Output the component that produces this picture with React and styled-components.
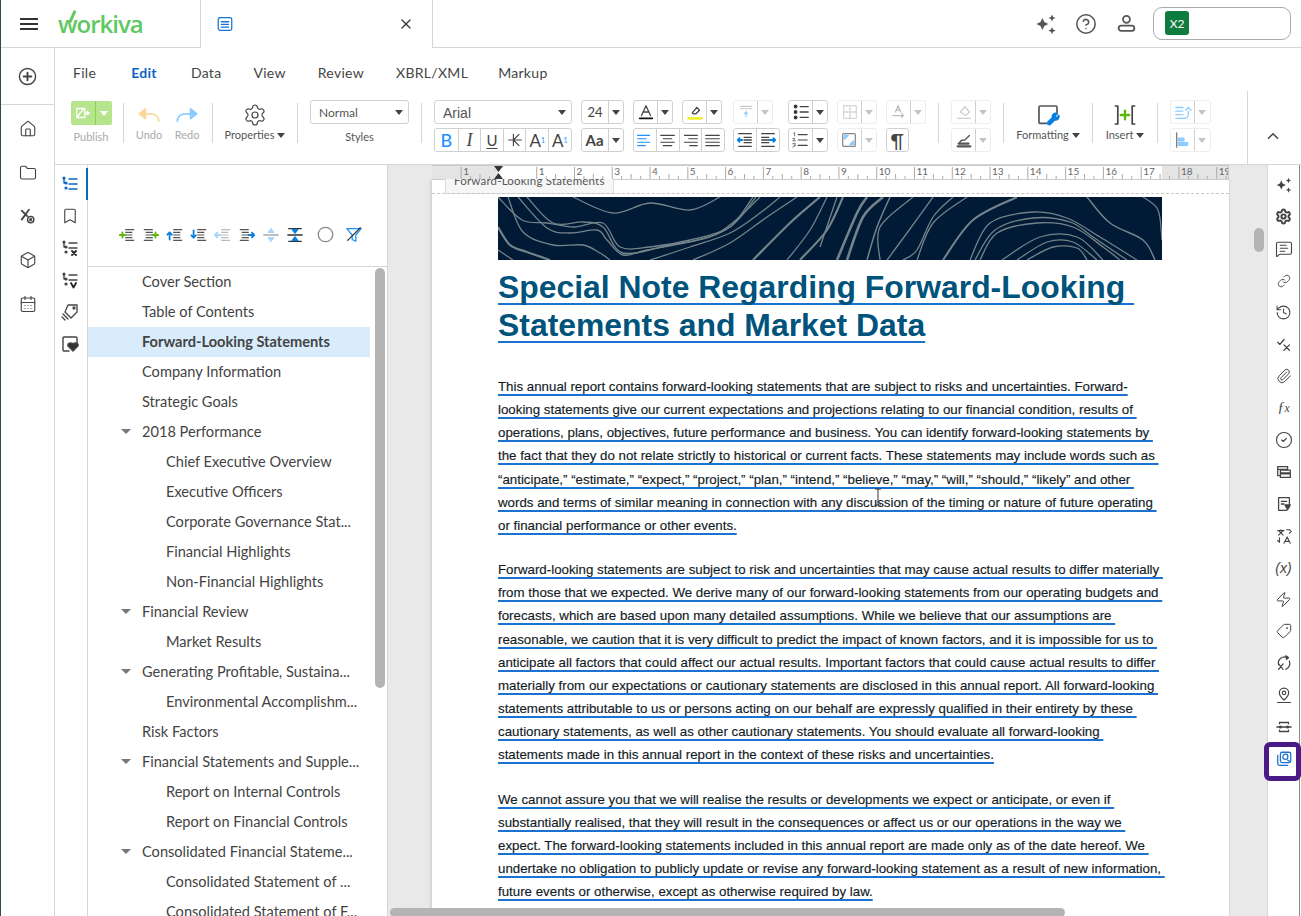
import React from 'react';
import styled, { createGlobalStyle } from 'styled-components';
import { Home, Folder, Box, CalendarDays, Bookmark, Settings, Link, History, Paperclip, CircleCheck, Zap, Tag, MapPin, ChevronUp, X, CircleHelp, MessageSquareText } from 'lucide-react';

const GlobalStyle = createGlobalStyle`
  html, body { margin: 0; padding: 0; background: #fff; }
  body { font-family: Lato, "Open Sans", sans-serif; color: #444; }
  * { box-sizing: border-box; }
`;

const Shell = styled.div`
  width: 1301px;
  height: 916px;
  overflow: hidden;
  display: flex;
  flex-direction: column;
  border-left: 1px solid #2f4a52;
  background: #fff;
`;

const TopBar = styled.header`
  height: 48px;
  flex: none;
  display: flex;
  align-items: stretch;
  border-bottom: 1px solid #d6d6d6;
`;

const Brand = styled.div`
  width: 199px;
  display: flex;
  align-items: center;
  padding-left: 19px;
  gap: 20px;
`;

const Burger = styled.span`
  width: 18px;
  height: 12px;
  border-top: 2px solid #333;
  border-bottom: 2px solid #333;
  position: relative;
  &::after {
    content: '';
    position: absolute;
    left: 0;
    right: 0;
    top: 3px;
    height: 2px;
    background: #333;
  }
`;

const Logo = styled.span`
  font-family: "Open Sans", sans-serif;
  font-size: 24px;
  font-weight: 600;
  letter-spacing: -1px;
  color: #5ec962;
  line-height: 1;
  margin-top: 1px;
  position: relative;
  &::after {
    content: '';
    position: absolute;
    left: 13px;
    top: -2px;
    width: 3px;
    height: 13px;
    border-radius: 2px;
    background: #5ec962;
    transform: rotate(24deg);
  }
`;

const DocTab = styled.div`
  width: 233px;
  height: 48px;
  background: #fff;
  border-left: 1px solid #d6d6d6;
  border-right: 1px solid #d6d6d6;
  display: flex;
  align-items: center;
  justify-content: space-between;
  padding: 0 18px 0 15px;
  color: #333;
`;

const TopActions = styled.div`
  margin-left: auto;
  display: flex;
  align-items: center;
  padding-right: 10px;
  color: #555;
`;

const TopIcon = styled.span`
  width: 40px;
  display: flex;
  justify-content: center;
`;

const Workspace = styled.div`
  width: 138px;
  height: 33px;
  margin-left: 7px;
  border: 1px solid #aaa;
  border-radius: 9px;
  padding: 3px 11px;
  display: flex;
`;

const WorkspaceBadge = styled.span`
  width: 24px;
  height: 24px;
  border-radius: 3px;
  background: #0f7b3e;
  color: #fff;
  font-size: 12px;
  display: flex;
  align-items: center;
  justify-content: center;
`;

const Body = styled.div`
  flex: 1;
  min-height: 0;
  display: flex;
`;

const LeftRail = styled.nav`
  width: 54px;
  flex: none;
  border-right: 1px solid #d6d6d6;
  color: #444;
`;

const CreateCell = styled.div`
  height: 57px;
  border-bottom: 1px solid #d6d6d6;
  display: flex;
  align-items: center;
  justify-content: center;
`;

const RailList = styled.div`
  display: flex;
  flex-direction: column;
  align-items: center;
  gap: 25.7px;
  padding-top: 15px;
  & > * { height: 18px; }
`;

const Main = styled.div`
  flex: 1;
  min-width: 0;
  display: flex;
  flex-direction: column;
`;

const Ribbon = styled.section`
  height: 117px;
  flex: none;
  display: flex;
  border-bottom: 1px solid #d6d6d6;
`;

const RibbonMain = styled.div`
  flex: 1;
  min-width: 0;
`;

const MenuRow = styled.div`
  height: 52px;
  display: flex;
  align-items: center;
  gap: 32px;
  padding: 0 0 3px 18px;
`;

const MenuItem = styled.span`
  font-size: 14px;
  letter-spacing: 0.3px;
  margin-left: ${({ $ml }) => $ml ?? 0}px;
  font-weight: ${({ $active }) => ($active ? 700 : 400)};
  color: ${({ $active }) => ($active ? '#0b65c2' : '#444')};
`;

const ToolRow = styled.div`
  display: flex;
  gap: 12px;
  padding-left: 16px;
`;

const Sep = styled.span`
  width: 1px;
  height: 40px;
  margin-top: 3px;
  background: #d6d6d6;
  flex: none;
`;

const ToolGroup = styled.div`
  width: ${({ $w }) => $w}px;
  flex: none;
  display: flex;
  flex-direction: column;
  align-items: center;
  padding-top: ${({ $pt }) => $pt ?? 0}px;
`;

const ToolPair = styled.div`
  width: ${({ $w }) => $w}px;
  flex: none;
  display: flex;
  justify-content: space-between;
`;

const ToolLabel = styled.span`
  font-size: 11px;
  line-height: 14px;
  white-space: nowrap;
  margin-top: ${({ $mt }) => $mt ?? 0}px;
  color: ${({ $muted }) => ($muted ? '#aaa' : '#555')};
`;

const Caret = styled.i`
  display: inline-block;
  width: 0;
  height: 0;
  border-left: ${({ $wide }) => ($wide ? 5.5 : 4.5)}px solid transparent;
  border-right: ${({ $wide }) => ($wide ? 5.5 : 4.5)}px solid transparent;
  border-top: 5px solid ${({ $color }) => $color || '#444'};
  margin-left: ${({ $ml }) => $ml ?? 0}px;
  vertical-align: 1px;
`;

const PublishBtn = styled.div`
  width: 41px;
  height: 24px;
  margin-top: 1px;
  border-radius: 2px;
  background: #b7e58d;
  display: flex;
`;

const PublishPart = styled.span`
  display: flex;
  align-items: center;
  justify-content: center;
  width: ${({ $w }) => $w}px;
  & + & { border-left: 1px solid #8fd14f; }
`;

const Select = styled.div`
  width: ${({ $w }) => $w}px;
  height: 24px;
  flex: none;
  border: 1px solid #d0d0d0;
  border-radius: 3px;
  display: flex;
  align-items: center;
  justify-content: space-between;
  padding: 1px 5px 0 ${({ $pad }) => $pad}px;
  font-size: ${({ $font }) => $font}px;
  font-family: ${({ $sans }) => ($sans ? '"Liberation Sans", sans-serif' : 'inherit')};
  color: #555;
`;

const FormatBlock = styled.div`
  width: ${({ $w }) => $w}px;
  flex: none;
  display: flex;
  flex-direction: column;
  gap: 4px;
`;

const FormatRow = styled.div`
  display: flex;
`;

const Seg = styled.div`
  flex: none;
  display: flex;
  height: 24px;
  margin-left: ${({ $ml }) => $ml ?? 0}px;
  border: 1px solid ${({ $off }) => ($off ? '#ededed' : '#d0d0d0')};
  border-radius: 3px;
`;

const Cell = styled.span`
  width: ${({ $w }) => $w ?? 22.6}px;
  flex: none;
  display: flex;
  align-items: center;
  justify-content: center;
  position: relative;
  color: #444;
  font-size: ${({ $font }) => $font ?? 15}px;
  font-weight: ${({ $bold }) => ($bold ? 700 : 400)};
  line-height: 1;
  & + & { border-left: 1px solid ${({ $off }) => ($off ? '#ededed' : '#d0d0d0')}; }
`;

const BoldLetter = styled.span`
  color: #1e90ff;
  font-weight: 500;
`;

const ItalicLetter = styled.span`
  font-family: "Liberation Serif", serif;
  font-style: italic;
`;

const UnderLetter = styled.span`
  text-decoration: underline;
  text-underline-offset: 2px;
`;

const Mini = styled.sub`
  font-size: 7px;
  color: #1e90ff;
  vertical-align: ${({ $up }) => ($up ? '8px' : '-3px')};
`;

const Collapse = styled.div`
  width: 54px;
  flex: none;
  align-self: flex-end;
  height: 73px;
  border-left: 1px solid #d6d6d6;
  display: flex;
  justify-content: center;
  padding: 36px 3px 0 0;
  color: #444;
`;

const Workbench = styled.div`
  flex: 1;
  min-height: 0;
  display: flex;
  position: relative;
  overflow: hidden;
`;

const TabRail = styled.div`
  width: 33px;
  flex: none;
  border-right: 1px solid #d6d6d6;
  display: flex;
  flex-direction: column;
  align-items: center;
  gap: 12px;
  padding: 9px 2px 0 0;
  position: relative;
  color: #444;
  & > * { height: 20px; }
`;

const ActiveMark = styled.span`
  position: absolute;
  top: 3px;
  right: -1px;
  width: 2px;
  height: 32px !important;
  background: #0b65c2;
`;

const Outline = styled.aside`
  width: 300px;
  flex: none;
  border-right: 1px solid #d6d6d6;
  position: relative;
  overflow: hidden;
`;

const OutlineTools = styled.div`
  height: 102px;
  border-bottom: 1px solid #d6d6d6;
  display: flex;
  align-items: center;
  padding: 38px 0 0 27px;
`;

const OutlineTool = styled.span`
  width: ${({ $w }) => $w ?? 24}px;
  display: flex;
  justify-content: center;
`;

const TreeRow = styled.div`
  height: 30px;
  width: 282px;
  display: flex;
  align-items: center;
  padding: 0 0 2px ${({ $depth }) => 33 + $depth * 24}px;
  font-size: 14.6px;
  white-space: nowrap;
  color: #444;
  font-weight: ${({ $selected }) => ($selected ? 700 : 400)};
  background: ${({ $selected }) => ($selected ? '#d9ecfb' : 'transparent')};
`;

const TreeSlot = styled.span`
  width: 21px;
  flex: none;
  display: flex;
`;

const Thumb = styled.span`
  position: absolute;
  background: #b4b4b4;
  border-radius: 5px;
  left: ${({ $x }) => $x}px;
  top: ${({ $y }) => $y}px;
  width: ${({ $w }) => $w}px;
  height: ${({ $h }) => $h}px;
`;

const DocArea = styled.main`
  flex: 1;
  min-width: 0;
  background: #e9e9e9;
  padding-left: 44px;
  position: relative;
  overflow: hidden;
`;

const PageColumn = styled.div`
  width: 797px;
`;

const RulerSvg = styled.svg`
  display: block;
  width: 797px;
  height: 15px;
`;

const Page = styled.article`
  background: #fff;
  height: 760px;
  box-shadow: -2px 0 2px #d4d4dc, 1px 0 1px #d8d8d8;
  position: relative;
  padding: 17px 0 0 66px;
`;

const PageTag = styled.div`
  position: absolute;
  left: 13px;
  top: -1px;
  width: 169px;
  height: 15px;
  background: #f6f6f6;
  border: 1px solid #dcdcdc;
  border-top: 0;
  overflow: hidden;
  font-size: 11.5px;
  line-height: 14px;
  padding-left: 8px;
  color: #555;
  letter-spacing: 0.2px;
  white-space: nowrap;
  & > span { position: relative; top: -5px; }
`;

const Dashes = styled.div`
  position: absolute;
  left: 0;
  right: 0;
  top: 13px;
  border-top: 1px dashed #c8c8c8;
`;

const Banner = styled.svg`
  display: block;
  width: 664px;
  height: 63px;
  background: #011a35;
`;

const Heading = styled.h1`
  margin: 8px 0 31px;
  font: 700 31.9px/38px "Liberation Sans", Arial, sans-serif;
  color: #00537a;
`;

const Para = styled.p`
  margin: 0 0 21px;
  font: 400 13.31px/23.15px "Liberation Sans", Arial, sans-serif;
  color: #131c26;
  -webkit-text-stroke: 0.15px #131c26;
`;

const Line = styled.span`
  display: block;
  white-space: pre;
  text-decoration: underline;
  text-decoration-color: #1a73d1;
  text-decoration-thickness: 2px;
  text-underline-offset: ${({ $offset }) => $offset ?? 3}px;
  text-decoration-skip-ink: none;
`;

const Cursor = styled.svg`
  position: absolute;
  left: 442px;
  top: 308px;
`;

const RightRail = styled.div`
  width: 33px;
  margin-right: 1px;
  flex: none;
  background: #fff;
  border-left: 1px solid #d6d6d6;
  border-right: 1px solid #8a8a8a;
  display: flex;
  flex-direction: column;
  align-items: center;
  padding-top: 4px;
  position: relative;
  color: #444;
`;

const RailSlot = styled.span`
  height: 31.9px;
  width: 100%;
  flex: none;
  display: flex;
  align-items: center;
  justify-content: center;
  color: ${({ $active }) => ($active ? '#1a73d1' : '#444')};
`;

const Formula = styled.span`
  font-family: ${({ $serif }) => ($serif ? '"Liberation Serif", serif' : '"Liberation Sans", sans-serif')};
  font-style: italic;
  font-size: 14px;
`;

const PinWrap = styled.span`
  display: flex;
  border-bottom: 1.5px solid #444;
  padding-bottom: 1px;
`;

const TiltedTag = styled(Tag)`
  transform: rotate(90deg);
`;

const FocusRing = styled.span`
  position: absolute;
  left: -4px;
  right: -2px;
  top: 577px;
  height: 39px;
  border: 5px solid #4a1a87;
  border-radius: 6px;
`;

const Icon = ({ size = 18, vb = 20, children, sw = 1.4, color = 'currentColor' }) => (
  <svg width={size} height={size} viewBox={`0 0 ${vb} ${vb}`} fill="none" stroke={color} strokeWidth={sw} strokeLinecap="round" strokeLinejoin="round">
    {children}
  </svg>
);

const Spark = ({ size = 20 }) => (
  <Icon size={size} sw={0}>
    <path fill="currentColor" d="M7 5l1.600 3.400L12 10l-3.400 1.600L7 15l-1.600-3.400L2 10l3.400-1.600zM15 2l.9 2.100L18 5l-2.100.9L15 8l-.9-2.100L12 5l2.100-.9zM15 12.500l.9 2.100 2.100.9-2.100.9-.9 2.100-.9-2.100-2.100-.9 2.100-.9z" />
  </Icon>
);

const TreeGlyph = ({ color = '#0b65c2', extra }) => (
  <Icon size={20}>
    <g stroke={color}>
      <path d="M4 4v5h2M9 5h8M9 10h8" />
      <circle cx="4" cy="4" r=".9" fill={color} />
      <circle cx="6" cy="9" r=".9" fill={color} />
      <circle cx="6" cy="14" r=".9" fill={color} />
      {extra ? null : <path d="M9 15h8" />}
    </g>
    {extra}
  </Icon>
);

const LinesArrow = ({ arrow, color, left, faded }) => (
  <Icon size={18}>
    <g stroke={faded ? '#bbb' : '#555'} strokeWidth="1.3" strokeLinecap="butt">
      <path d={left ? 'M2 4h10M4 7h8M4 10h8M4 13h8M2 16h10' : 'M8 4h10M8 7h8M8 10h8M8 13h8M8 16h10'} />
    </g>
    <path d={arrow} stroke={color} strokeWidth="2" />
  </Icon>
);

const AlignGlyph = ({ d, color = '#444' }) => (
  <Icon size={17} sw={1.3} color={color}><path d={d} /></Icon>
);

const Split = ({ main, off, ml, cw = 23, dw = 15, font }) => (
  <Seg $off={off} $ml={ml}>
    <Cell $off={off} $w={cw} $font={font}>{main}</Cell>
    <Cell $off={off} $w={dw}><Caret $color={off ? '#c4c4c4' : '#444'} /></Cell>
  </Seg>
);

const contours = [
  [1.3, [[75, 0], [115, 16], [152, 6], [192, 13], [222, 0]]],
  [1.3, [[0, 0], [24, 23], [49, 26], [76, 30], [105, 26], [122, 50], [152, 50], [192, 43], [232, 30], [258, 0]]],
  [1.3, [[29, 0], [55, 26], [85, 25], [105, 30], [125, 56], [172, 48], [212, 40], [238, 23], [262, 0]]],
  [1.3, [[20, 0], [49, 31], [72, 36], [99, 33], [109, 43], [125, 58], [149, 53], [199, 43], [232, 30], [255, 0]]],
  [1.3, [[10, 0], [25, 35], [55, 48], [85, 48], [102, 56], [112, 63]]],
  [2.2, [[0, 30], [12, 48], [29, 55], [52, 63]]],
  [1.3, [[0, 53], [15, 63]]],
  [1.3, [[152, 63], [192, 50], [232, 36], [262, 16], [282, 0]]],
  [1.3, [[195, 63], [232, 46], [269, 20], [299, 0]]],
  [2.2, [[255, 63], [292, 26], [322, 0]]],
  [1.3, [[289, 63], [312, 33], [329, 0]]],
  [2.2, [[302, 63], [329, 33], [345, 0]]],
  [1.3, [[322, 50], [339, 0]]],
  [2.6, [[339, 63], [359, 16], [369, 0]]],
  [2.6, [[349, 63], [365, 20], [385, 0]]],
  [1.5, [[369, 63], [379, 30], [392, 0]]],
  [1.3, [[382, 63], [382, 30], [415, 0]]],
  [1.3, [[389, 63], [409, 36], [435, 0]]],
  [1.3, [[405, 63], [419, 53], [435, 20], [455, 0]]],
  [1.3, [[419, 63], [435, 26], [469, 0]]],
  [2, [[445, 63], [475, 23], [519, 0]]],
  [1.3, [[472, 63], [492, 26], [535, 15], [569, 21], [602, 40], [639, 63]]],
  [1.3, [[477, 63], [497, 33], [535, 21], [572, 25], [595, 40], [629, 63]]],
  [1.3, [[482, 63], [499, 36], [539, 26], [575, 30], [605, 50], [622, 63]]],
  [1.3, [[504, 63], [542, 40], [579, 40], [605, 63]]],
  [1.3, [[519, 63], [549, 45], [575, 45], [599, 63]]],
  [1.3, [[529, 63], [555, 50], [579, 51], [589, 63]]],
  [1.5, [[589, 0], [612, 26], [645, 43], [657, 63]]],
  [1.3, [[645, 0], [660, 13], [664, 43]]],
];

// catmull-rom through the traced points
const smooth = pts => {
  let d = `M${pts[0][0]} ${pts[0][1]}`;
  for (let i = 0; i < pts.length - 1; i += 1) {
    const p0 = pts[i - 1] || pts[i];
    const p1 = pts[i];
    const p2 = pts[i + 1];
    const p3 = pts[i + 2] || p2;
    d += `C${p1[0] + (p2[0] - p0[0]) / 6} ${p1[1] + (p2[1] - p0[1]) / 6} ${p2[0] - (p3[0] - p1[0]) / 6} ${p2[1] - (p3[1] - p1[1]) / 6} ${p2[0]} ${p2[1]}`;
  }
  return d;
};

const tree = [
  ['Cover Section', 0], ['Table of Contents', 0], ['Forward-Looking Statements', 0, 'selected'],
  ['Company Information', 0], ['Strategic Goals', 0], ['2018 Performance', 0, 'open'],
  ['Chief Executive Overview', 1], ['Executive Officers', 1], ['Corporate Governance Stat...', 1],
  ['Financial Highlights', 1], ['Non-Financial Highlights', 1], ['Financial Review', 0, 'open'],
  ['Market Results', 1], ['Generating Profitable, Sustaina...', 0, 'open'], ['Environmental Accomplishm...', 1],
  ['Risk Factors', 0], ['Financial Statements and Supple...', 0, 'open'], ['Report on Internal Controls', 1],
  ['Report on Financial Controls', 1], ['Consolidated Financial Stateme...', 0, 'open'],
  ['Consolidated Statement of ...', 1], ['Consolidated Statement of F...', 1],
];

const paragraphs = [
  [
    'This annual report contains forward-looking statements that are subject to risks and uncertainties. Forward-',
    'looking statements give our current expectations and projections relating to our financial condition, results of ',
    'operations, plans, objectives, future performance and business. You can identify forward-looking statements by ',
    'the fact that they do not relate strictly to historical or current facts. These statements may include words such as ',
    '“anticipate,” “estimate,” “expect,” “project,” “plan,” “intend,” “believe,” “may,” “will,” “should,” “likely” and other ',
    'words and terms of similar meaning in connection with any discussion of the timing or nature of future operating ',
    'or financial performance or other events.',
  ],
  [
    'Forward-looking statements are subject to risk and uncertainties that may cause actual results to differ materially ',
    'from those that we expected. We derive many of our forward-looking statements from our operating budgets and ',
    'forecasts, which are based upon many detailed assumptions. While we believe that our assumptions are ',
    'reasonable, we caution that it is very difficult to predict the impact of known factors, and it is impossible for us to ',
    'anticipate all factors that could affect our actual results. Important factors that could cause actual results to differ ',
    'materially from our expectations or cautionary statements are disclosed in this annual report. All forward-looking ',
    'statements attributable to us or persons acting on our behalf are expressly qualified in their entirety by these ',
    'cautionary statements, as well as other cautionary statements. You should evaluate all forward-looking ',
    'statements made in this annual report in the context of these risks and uncertainties.',
  ],
  [
    'We cannot assure you that we will realise the results or developments we expect or anticipate, or even if ',
    'substantially realised, that they will result in the consequences or affect us or our operations in the way we ',
    'expect. The forward-looking statements included in this annual report are made only as of the date hereof. We ',
    'undertake no obligation to publicly update or revise any forward-looking statement as a result of new information, ',
    'future events or otherwise, except as otherwise required by law.',
  ],
];

const Ruler = () => {
  const start = 104.7;
  const step = 37.78;
  const marks = [];
  for (let n = -1; n <= 19; n += 1) {
    const x = start + (n - 1) * step;
    if (n === 0) continue;
    marks.push(<path key={`t${n}`} d={`M${x} 2V14`} stroke="#aaa" strokeWidth="1" />);
    [1, 2, 3].forEach(q => {
      marks.push(<path key={`q${n}${q}`} d={`M${x + q * step / 4} ${q === 2 ? 9 : 11}V14`} stroke="#aaa" strokeWidth="1" />);
    });
    marks.push(<text key={`n${n}`} x={x + 2} y="10" fontSize="10" fill="#666" fontFamily="Lato, sans-serif">{Math.abs(n)}</text>);
  }
  return (
    <RulerSvg viewBox="0 0 797 15">
      <rect width="797" height="15" fill="#fff" />
      <rect width="66" height="15" fill="#e4e4e4" />
      <rect x="730" width="67" height="15" fill="#e4e4e4" />
      {marks}
      <path d="M0 .5H797M0 14.500H797M796.500 0V15" stroke="#c8c8c8" />
      <path d="M62 1h9l-4.500 6zM62 14h9l-4.500-6z" fill="#333" />
    </RulerSvg>
  );
};

const rightRail = [
  <Spark size={18} />,
  <Settings size={17} strokeWidth={2.8} />,
  <MessageSquareText size={18} strokeWidth={1.5} />,
  <Link size={14} strokeWidth={1.5} />,
  <History size={17} strokeWidth={1.5} />,
  <Icon size={18}><path d="M3 8l2.500 2.500L10 5M10 11l6 6M16 11l-6 6" /></Icon>,
  <Paperclip size={16} strokeWidth={1.5} />,
  <Formula $serif>ƒ<small>x</small></Formula>,
  <CircleCheck size={18} strokeWidth={1.5} />,
  <Icon size={18}><path d="M3 4h11v3H3zM6 8h11v3H6zM6 12h11v4H6zM3 7v7h3" /></Icon>,
  <Icon size={18}><path d="M4 3h12v10l-3 4H4zM7 7h6M7 10h3" /><path d="M11 11h6l-3 5z" fill="#444" /></Icon>,
  <Icon size={18} sw={1.2}><path d="M3 4h7M6.500 3v1M4 9l5-5M4 4l5 5M13 3h3l2 2-2 2M5 12v5M3 15l2 2M10 18l3.500-7 3.500 7M11.500 16h4" /></Icon>,
  <Formula>(x)</Formula>,
  <Zap size={17} strokeWidth={1.4} />,
  <TiltedTag size={16} strokeWidth={1.5} />,
  <Icon size={18}><path d="M4 12a7 7 0 0 1 10-8M16 8a7 7 0 0 1-4 9M4 11l5 6M9 11l-5 6" /><path d="M12 2l3 2-2 2z" fill="#444" /></Icon>,
  <PinWrap><MapPin size={14} strokeWidth={2} /></PinWrap>,
  <Icon size={18}><path d="M2 10h16M5 6.500V5h10v1.500M5 13.500V15h10v-1.500" /><circle cx="6" cy="10" r="1" fill="#444" /><circle cx="14" cy="10" r="1" fill="#444" /></Icon>,
  <Icon size={18} color="#1a73d1"><rect x="6" y="2.500" width="11.500" height="11.500" rx="2" /><path d="M3 6v9a2 2 0 0 0 2 2h9" /><circle cx="11.500" cy="7.500" r="2.800" /><path d="M14 11l3 2" /></Icon>,
];

const App = () => (
  <Shell>
    <GlobalStyle />
    <TopBar>
      <Brand>
        <Burger />
        <Logo>workiva</Logo>
      </Brand>
      <DocTab>
        <Icon size={18} color="#1a73d1"><rect x="2.500" y="3" width="15" height="14" rx="2" /><path d="M6 7.500h8M6 10.500h8M6 13.500h8" /></Icon>
        <X size={16} strokeWidth={1.8} />
      </DocTab>
      <TopActions>
        <TopIcon><Spark size={24} /></TopIcon>
        <TopIcon><CircleHelp size={22} strokeWidth={1.7} /></TopIcon>
        <TopIcon>
          <Icon size={21} sw={1.7}><circle cx="10" cy="6" r="3.300" /><rect x="2.500" y="12" width="15" height="5" rx="2.500" /></Icon>
        </TopIcon>
        <Workspace><WorkspaceBadge>X2</WorkspaceBadge></Workspace>
      </TopActions>
    </TopBar>
    <Body>
      <LeftRail>
        <CreateCell>
          <Icon size={19} sw={1.5}><circle cx="10" cy="10" r="8.500" /><path d="M10 6v8M6 10h8" strokeWidth="2" /></Icon>
        </CreateCell>
        <RailList>
          <Home size={18} strokeWidth={1.5} />
          <Folder size={18} strokeWidth={1.5} />
          <Icon size={18} sw={1.6}><path d="M3 14l8-11M3 4l6 6" strokeWidth="2" /><circle cx="13" cy="14" r="3.500" /><circle cx="13" cy="14" r="1" /></Icon>
          <Box size={18} strokeWidth={1.5} />
          <CalendarDays size={18} strokeWidth={1.5} />
        </RailList>
      </LeftRail>
      <Main>
        <Ribbon>
          <RibbonMain>
            <MenuRow>
              <MenuItem>File</MenuItem>
              <MenuItem $active $ml={3}>Edit</MenuItem>
              <MenuItem $ml={2}>Data</MenuItem>
              <MenuItem>View</MenuItem>
              <MenuItem>Review</MenuItem>
              <MenuItem>XBRL/XML</MenuItem>
              <MenuItem $ml={-2}>Markup</MenuItem>
            </MenuRow>
            <ToolRow>
              <ToolGroup $w={40}>
                <PublishBtn>
                  <PublishPart $w={24}>
                    <Icon size={18} color="#fff"><path d="M3 5h9v10H3zM12 10h5M14.500 8l2.500 2-2.500 2M3 15l8-10" /></Icon>
                  </PublishPart>
                  <PublishPart $w={17}><Caret $color="#fff" /></PublishPart>
                </PublishBtn>
                <ToolLabel $muted $mt={5}>Publish</ToolLabel>
              </ToolGroup>
              <Sep />
              <ToolPair $w={64}>
                <ToolGroup $w={26} $pt={3}>
                  <Icon size={24} color="#fbd79b" sw={1.5}><path d="M18 15c0-4-3-6-7-6H6" /><path d="M7 5L2 9l5 4z" fill="#fbd79b" /></Icon>
                  <ToolLabel $muted $mt={1}>Undo</ToolLabel>
                </ToolGroup>
                <ToolGroup $w={26} $pt={3}>
                  <Icon size={24} color="#8ccbff" sw={1.5}><path d="M2 15c0-4 3-6 7-6h5" /><path d="M13 5l5 4-5 4z" fill="#8ccbff" /></Icon>
                  <ToolLabel $muted $mt={1}>Redo</ToolLabel>
                </ToolGroup>
              </ToolPair>
              <Sep />
              <ToolGroup $w={60} $pt={3}>
                <Settings size={24} strokeWidth={1.2} color="#444" />
                <ToolLabel $mt={1}>Properties<Caret $ml={3} /></ToolLabel>
              </ToolGroup>
              <Sep />
              <ToolGroup $w={99}>
                <Select $w={99} $pad={8} $font={12}>Normal<Caret /></Select>
                <ToolLabel $mt={6}>Styles</ToolLabel>
              </ToolGroup>
              <Sep />
              <FormatBlock $w={492}>
                <FormatRow>
                  <Select $w={138} $pad={8} $font={14} $sans>Arial<Caret /></Select>
                  <Split ml={9} cw={26} font={13} main="24" />
                  <Split ml={9} main={<Icon size={18}><path d="M5 14l5-11 5 11M7 10h6" /><path d="M3 17h14" stroke="#111" strokeWidth="2" /></Icon>} />
                  <Split ml={9} main={<Icon size={18}><path d="M7 11l5-6 3 3-4 4H8z" /><path d="M3 17h14" stroke="#f3ee2f" strokeWidth="3" /></Icon>} />
                  <Split ml={11} off main={<Icon size={16} color="#c8c8c8"><path d="M3 3h14M3 6h14" /><path d="M10 9v7M8 12l2-2 2 2" stroke="#8ccbff" /></Icon>} />
                  <Split ml={15} main={<Icon size={18}><circle cx="4" cy="4" r="1.500" fill="#111" /><circle cx="4" cy="10" r="1.500" fill="#111" /><circle cx="4" cy="16" r="1.500" fill="#111" /><path d="M9 4h9M9 10h9M9 16h9" /></Icon>} />
                  <Split ml={9} off main={<Icon size={18} color="#cfcfcf"><path d="M3 3h14v14H3zM10 3v14M3 10h14" strokeDasharray="1.500 1.500" /></Icon>} />
                  <Split ml={9} off main={<Icon size={18} color="#bbb"><path d="M6 10l3-7 3 7M7 8h4M3 14h12M13 12l2 2-2 2" /></Icon>} />
                </FormatRow>
                <FormatRow>
                  <Seg>
                    <Cell $font={18}><BoldLetter>B</BoldLetter></Cell>
                    <Cell $font={18}><ItalicLetter>I</ItalicLetter></Cell>
                    <Cell $font={15}><UnderLetter>U</UnderLetter></Cell>
                    <Cell><Icon size={16}><path d="M8 3v14M2 10h16M15 3l-7 7 7 7" /></Icon></Cell>
                    <Cell $font={17}>A<Mini $up>1</Mini></Cell>
                    <Cell $font={17}>A<Mini>1</Mini></Cell>
                  </Seg>
                  <Split ml={9} cw={26} font={15} main={<Cell as="b" $w={20} $bold $font={15}>Aa</Cell>} />
                  <Seg $ml={9}>
                    <Cell $w={22.5}><AlignGlyph color="#1e90ff" d="M2 4h14M2 8h10M2 12h14M2 16h9" /></Cell>
                    <Cell $w={22.5}><AlignGlyph d="M2 4h16M5 8h10M2 12h16M5 16h10" /></Cell>
                    <Cell $w={22.5}><AlignGlyph d="M3 4h15M8 8h10M3 12h15M9 16h9" /></Cell>
                    <Cell $w={22.5}><AlignGlyph d="M2 4h16M2 8h16M2 12h16M2 16h16" /></Cell>
                  </Seg>
                  <Seg $ml={8}>
                    <Cell $w={22.5}><Icon size={18}><path d="M3 3h14M9 7h8M9 10h8M9 13h8M3 17h14" /><path d="M7 10H2M4 8l-2 2 2 2" stroke="#0b7fe0" strokeWidth="2" /></Icon></Cell>
                    <Cell $w={22.5}><Icon size={18}><path d="M3 3h14M3 7h8M3 10h8M3 13h8M3 17h14" /><path d="M12 10h6M16 8l2 2-2 2" stroke="#0b7fe0" strokeWidth="2" /></Icon></Cell>
                  </Seg>
                  <Split ml={8} main={<Icon size={18} sw={1.2}><path d="M8 4h10M8 10h10M8 16h10" /><path d="M3 2.500l1-1v4M2 8.500h2.500L2 11h3M2 14h3l-1.500 2H5l-3 2" strokeWidth=".8" /></Icon>} />
                  <Split ml={9} off main={<Icon size={18} color="#888"><rect x="3" y="3" width="14" height="14" rx="1" /><path d="M5 9V5h4zM15 11v4h-4z" fill="#8ccbff" stroke="#8ccbff" /></Icon>} />
                  <Seg $ml={9}><Cell $w={21} $font={19}>¶</Cell></Seg>
                </FormatRow>
              </FormatBlock>
              <Sep />
              <FormatBlock $w={40}>
                <Split off main={<Icon size={18} color="#ccc"><path d="M6 10l5-6 5 6-4 4zM3 17h14" /></Icon>} />
                <Split off main={<Icon size={18} color="#555"><path d="M5 14c0-3 3-4 6-4l5-5" /><path d="M3 17h14M4 14h11" strokeWidth="2.500" /></Icon>} />
              </FormatBlock>
              <Sep />
              <ToolGroup $w={64} $pt={3}>
                <Icon size={24} color="#555"><path d="M8 17H3.500a1 1 0 0 1-1-1V3.500a1 1 0 0 1 1-1h13a1 1 0 0 1 1 1V9" /><path d="M9 17l5-5c-1-2 1-4 3.500-3l-2 2 1.500 1.500 2-2c.5 2.500-1.500 4-3.500 3.500l-4 4z" fill="#0b7fe0" stroke="#0b7fe0" /></Icon>
                <ToolLabel $mt={1}>Formatting<Caret $ml={3} /></ToolLabel>
              </ToolGroup>
              <Sep />
              <ToolGroup $w={40} $pt={3}>
                <Icon size={24} color="#444"><path d="M2 2.500h2v15H2M18 2.500h-2v15h2" /><path d="M10 6.500v7M6.500 10h7" stroke="#5cb800" strokeWidth="2" /></Icon>
                <ToolLabel $mt={1}>Insert<Caret $ml={3} /></ToolLabel>
              </ToolGroup>
              <Sep />
              <FormatBlock $w={41}>
                <Split off main={<Icon size={18} color="#8ccbff"><path d="M2 5h8M2 9h8M2 13h8M2 17h10c4 0 4-3 4-8" /><path d="M13 8l3-3 3 3" /></Icon>} />
                <Split off main={<Icon size={18} color="#8ccbff"><path d="M3 2v16" stroke="#777" /><path d="M5 8h6v3H5zM5 13h10v3H5z" fill="#8ccbff" /></Icon>} />
              </FormatBlock>
            </ToolRow>
          </RibbonMain>
          <Collapse><ChevronUp size={18} strokeWidth={2} /></Collapse>
        </Ribbon>
        <Workbench>
          <TabRail>
            <ActiveMark />
            <TreeGlyph />
            <Bookmark size={18} strokeWidth={1.5} />
            <TreeGlyph color="#444" extra={<path d="M12 13l4 4M16 13l-4 4" stroke="#222" strokeWidth="1.800" />} />
            <TreeGlyph color="#444" extra={<path d="M11 13l2.500 4.500L16 13" stroke="#222" strokeWidth="1.800" />} />
            <Icon size={20} sw={1.3}><path d="M8 3h9v7l-6 6-6-6zM3 12l5 5M2 15l3 3" /><circle cx="14" cy="6" r="1" /></Icon>
            <Icon size={20} sw={1.4}><path d="M9 17H4a1 1 0 0 1-1-1V4a1 1 0 0 1 1-1h12a1 1 0 0 1 1 1v5" /><path d="M13 17l-5-5c-1-3 3-4 5-2 2-2 6-1 5 2z" fill="#333" /></Icon>
          </TabRail>
          <Outline>
            <OutlineTools>
              <OutlineTool><LinesArrow arrow="M2 10h6M5 7v6" color="#5cb800" /></OutlineTool>
              <OutlineTool><LinesArrow left arrow="M12 10h6M15 7v6" color="#5cb800" /></OutlineTool>
              <OutlineTool><LinesArrow arrow="M4 15V7M1.500 9.500L4 7l2.500 2.500" color="#0b7fe0" /></OutlineTool>
              <OutlineTool><LinesArrow arrow="M4 5v8M1.500 10.500L4 13l2.500-2.500" color="#0b7fe0" /></OutlineTool>
              <OutlineTool><LinesArrow faded arrow="M7 10H1M3.500 7.500L1 10l2.500 2.500" color="#a8d6ff" /></OutlineTool>
              <OutlineTool><LinesArrow left arrow="M12 10h6M15.500 7.500L18 10l-2.500 2.500" color="#0b7fe0" /></OutlineTool>
              <OutlineTool>
                <Icon size={18}><path d="M2 10h16" stroke="#aaa" /><path d="M7 7l3-4 3 4zM7 13l3 4 3-4z" fill="#a8d6ff" stroke="#a8d6ff" /></Icon>
              </OutlineTool>
              <OutlineTool>
                <Icon size={18}><path d="M3 3h14M3 17h14M2 10h16" stroke="#333" /><path d="M7 4l3 4 3-4zM7 16l3-4 3 4z" fill="#0b7fe0" stroke="#0b7fe0" /></Icon>
              </OutlineTool>
              <OutlineTool $w={36}>
                <Icon size={17} color="#888" sw={1.5}><circle cx="10" cy="10" r="8.500" /></Icon>
              </OutlineTool>
              <OutlineTool $w={22}>
                <Icon size={18} color="#1e90ff"><path d="M2 3h16l-6 7v7l-4-2v-5z" /><path d="M3 16L17 2" stroke="#333" /></Icon>
              </OutlineTool>
            </OutlineTools>
            {tree.map(([label, depth, flag]) => (
              <TreeRow key={label} $depth={depth} $selected={flag === 'selected'}>
                <TreeSlot>{flag === 'open' && <Caret $color="#777" $wide />}</TreeSlot>
                {label}
              </TreeRow>
            ))}
            <Thumb $x={287} $y={103} $w={10} $h={420} />
          </Outline>
          <DocArea>
            <PageColumn>
              <Ruler />
              <Page>
                <PageTag><span>Forward-Looking Statements</span></PageTag>
                <Dashes />
                <Banner viewBox="0 0 664 63">
                  {contours.map(([w, pts], i) => (
                    <path key={i} d={smooth(pts)} fill="none" stroke="#75838a" strokeWidth={w} />
                  ))}
                </Banner>
                <Heading>
                  <Line $offset={5}>Special Note Regarding Forward-Looking </Line>
                  <Line $offset={5}>Statements and Market Data</Line>
                </Heading>
                {paragraphs.map(lines => (
                  <Para key={lines[0]}>
                    {lines.map(text => <Line key={text}>{text}</Line>)}
                  </Para>
                ))}
                <Cursor width="8" height="18" viewBox="0 0 8 18">
                  <path d="M1 1h6M4 1v16M1 17h6" stroke="#333" fill="none" />
                </Cursor>
              </Page>
            </PageColumn>
            <Thumb $x={866} $y={63} $w={10} $h={24} />
            <Thumb $x={2} $y={743} $w={675} $h={9} />
          </DocArea>
          <RightRail>
            {rightRail.map((glyph, i) => (
              <RailSlot key={i} $active={i === rightRail.length - 1}>{glyph}</RailSlot>
            ))}
            <FocusRing />
          </RightRail>
        </Workbench>
      </Main>
    </Body>
  </Shell>
);

export default App;
